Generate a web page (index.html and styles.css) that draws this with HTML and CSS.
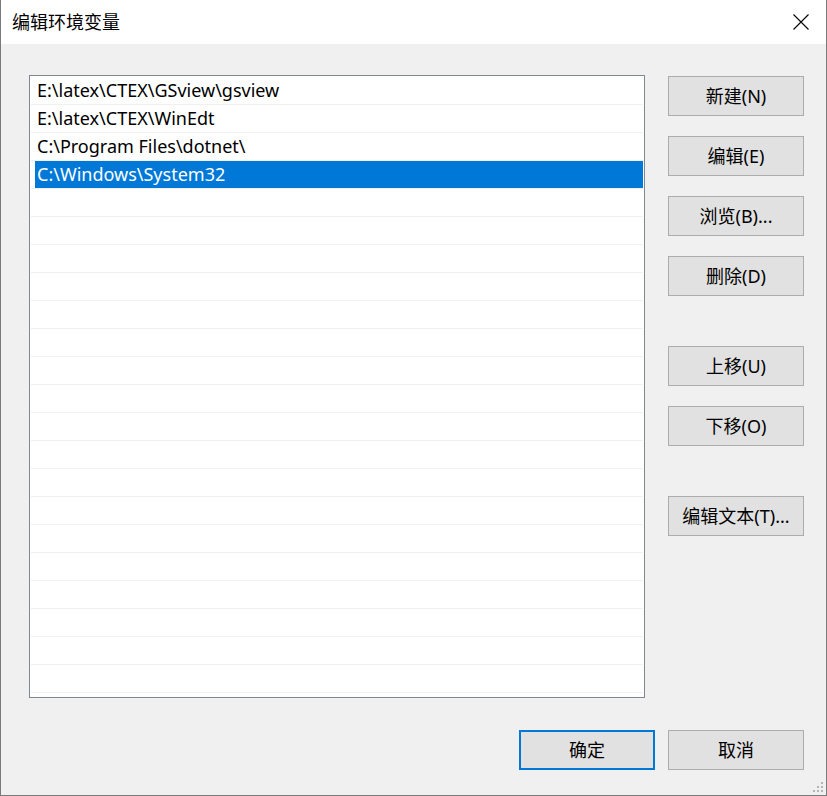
FILE: index.html
```html
<!DOCTYPE html>
<html lang="zh-CN">
<head>
<meta charset="utf-8">
<title>编辑环境变量</title>
<link rel="stylesheet" href="styles.css">
</head>
<body>
<div class="window">
  <div class="titlebar">
    <span class="title">编辑环境变量</span>
    <span class="close" aria-label="关闭">
      <svg width="16" height="16" viewBox="0 0 16 16"><path d="M0.5 0.5 L15.5 15.5 M15.5 0.5 L0.5 15.5" stroke="#000" stroke-width="1.1" fill="none"/></svg>
    </span>
  </div>
  <div class="content">
    <div class="main">
      <div class="list">
        <div class="row"><span class="cell">E:\latex\CTEX\GSview\gsview</span></div>
        <div class="row"><span class="cell">E:\latex\CTEX\WinEdt</span></div>
        <div class="row"><span class="cell">C:\Program Files\dotnet\</span></div>
        <div class="row"><span class="cell sel">C:\Windows\System32</span></div>
        <div class="row"><span class="cell"></span></div>
        <div class="row"><span class="cell"></span></div>
        <div class="row"><span class="cell"></span></div>
        <div class="row"><span class="cell"></span></div>
        <div class="row"><span class="cell"></span></div>
        <div class="row"><span class="cell"></span></div>
        <div class="row"><span class="cell"></span></div>
        <div class="row"><span class="cell"></span></div>
        <div class="row"><span class="cell"></span></div>
        <div class="row"><span class="cell"></span></div>
        <div class="row"><span class="cell"></span></div>
        <div class="row"><span class="cell"></span></div>
        <div class="row"><span class="cell"></span></div>
        <div class="row"><span class="cell"></span></div>
        <div class="row"><span class="cell"></span></div>
        <div class="row"><span class="cell"></span></div>
        <div class="row"><span class="cell"></span></div>
        <div class="row"><span class="cell"></span></div>
      </div>
      <div class="side">
        <button class="btn">新建(N)</button>
        <button class="btn">编辑(E)</button>
        <button class="btn">浏览(B)...</button>
        <button class="btn">删除(D)</button>
        <button class="btn group">上移(U)</button>
        <button class="btn">下移(O)</button>
        <button class="btn group">编辑文本(T)...</button>
      </div>
    </div>
    <div class="footer">
      <button class="btn default">确定</button>
      <button class="btn">取消</button>
    </div>
    <div class="grip">
      <svg width="10" height="10" viewBox="0 0 10 10" fill="#b4b4b4">
        <rect x="8" y="0" width="2" height="2"/>
        <rect x="4" y="4" width="2" height="2"/><rect x="8" y="4" width="2" height="2"/>
        <rect x="0" y="8" width="2" height="2"/><rect x="4" y="8" width="2" height="2"/><rect x="8" y="8" width="2" height="2"/>
      </svg>
    </div>
  </div>
</div>
</body>
</html>
```

FILE: styles.css
```css
* { box-sizing: border-box; }
html, body { margin: 0; padding: 0; background: #f0f0f0; }
body {
  font-family: "Noto Sans", "Noto Sans CJK SC", sans-serif;
  color: #000;
}
.window {
  width: 827px;
  height: 796px;
  border-left: 1px solid #7a7a7a;
  border-right: 1px solid #7a7a7a;
  border-bottom: 1px solid #7a7a7a;
  background: #f0f0f0;
  display: flex;
  flex-direction: column;
  position: relative;
}
.titlebar {
  height: 44px;
  background: #fff;
  display: flex;
  align-items: center;
  justify-content: space-between;
  padding: 0 17px 0 11px;
  flex: none;
}
.title {
  font-family: "Noto Sans CJK SC", sans-serif;
  font-size: 18px;
  line-height: 20px;
  margin-top: -2px;
}
.close { display: flex; width: 16px; height: 16px; }
.content {
  flex: 1;
  padding: 31px 22px 0 28px;
  display: flex;
  flex-direction: column;
}
.main { display: flex; gap: 23px; }
.list {
  width: 616px;
  height: 623px;
  background: #fff;
  border: 1px solid #828790;
  padding: 1px 1px 0 1px;
  overflow: hidden;
}
.row {
  height: 28px;
  border-bottom: 1px solid #f0f0f0;
  display: flex;
}
.cell {
  flex: 1;
  margin-left: 4px;
  padding-left: 2px;
  height: 27px;
  font-size: 18px;
  line-height: 27px;
  white-space: nowrap;
}
.cell.sel { background: #0078d7; color: #fff; }
.side {
  display: flex;
  flex-direction: column;
  gap: 20px;
  padding-top: 1px;
}
.btn {
  width: 136px;
  height: 40px;
  background: #e1e1e1;
  border: 1px solid #adadad;
  font-family: "Noto Sans", "Noto Sans CJK SC", sans-serif;
  font-size: 18px;
  color: #000;
  padding: 0;
  margin: 0;
  line-height: 36px;
}
.btn.group { margin-top: 30px; }
.btn.default { border: 2px solid #0078d7; }
.footer {
  display: flex;
  justify-content: flex-end;
  gap: 13px;
  margin-top: 32px;
}
.grip {
  position: absolute;
  right: 3px;
  bottom: 3px;
  width: 10px;
  height: 10px;
  display: flex;
}
```
